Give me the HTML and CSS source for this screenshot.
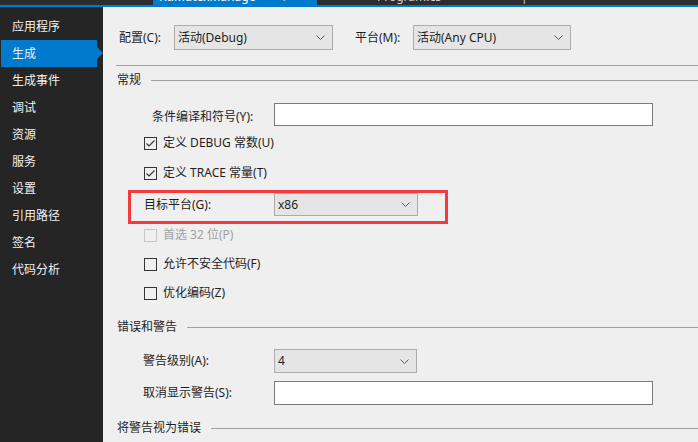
FILE: index.html
```html
<!DOCTYPE html>
<html lang="zh-CN">
<head>
<meta charset="utf-8">
<link rel="stylesheet" href="styles.css">
</head>
<body>
<div class="topbar">
  <div class="tabs">
    <div class="tab active"><span class="tab-text">Kt.MutexManage</span><span class="tab-icons">⊣ ×</span></div>
    <div class="tab other"><span class="tab-text">Program.cs</span><span class="tab-text far">|</span></div>
  </div>
</div>
<div class="accent"></div>
<div class="layout">
  <nav class="sidebar">
    <div class="nav-item">应用程序</div>
    <div class="nav-item selected">生成</div>
    <div class="nav-item">生成事件</div>
    <div class="nav-item">调试</div>
    <div class="nav-item">资源</div>
    <div class="nav-item">服务</div>
    <div class="nav-item">设置</div>
    <div class="nav-item">引用路径</div>
    <div class="nav-item">签名</div>
    <div class="nav-item">代码分析</div>
  </nav>
  <main class="main">
    <div class="config-row">
      <span class="cfg-label">配置(C):</span>
      <div class="combo combo-cfg"><span>活动(Debug)</span><svg class="chev" width="9" height="5" viewBox="0 0 9 5"><polyline points="0.5,0.5 4.5,4.5 8.5,0.5" fill="none" stroke="#5a5a5a"/></svg></div>
      <span class="cfg-label plat">平台(M):</span>
      <div class="combo combo-plat"><span>活动(Any CPU)</span><svg class="chev" width="9" height="5" viewBox="0 0 9 5"><polyline points="0.5,0.5 4.5,4.5 8.5,0.5" fill="none" stroke="#5a5a5a"/></svg></div>
    </div>
    <div class="rule"></div>

    <div class="section-head h-general"><span>常规</span><div class="line"></div></div>

    <div class="field-row r-cond">
      <span class="field-label">条件编译和符号(Y):</span>
      <div class="textbox"></div>
    </div>

    <div class="check-row r-debug">
      <span class="box"><svg width="11" height="11" viewBox="0 0 11 11"><polyline points="1.5,5.5 4,8 9.5,2.5" fill="none" stroke="#333" stroke-width="1.1"/></svg></span>
      <span>定义 DEBUG 常数(U)</span>
    </div>
    <div class="check-row r-trace">
      <span class="box"><svg width="11" height="11" viewBox="0 0 11 11"><polyline points="1.5,5.5 4,8 9.5,2.5" fill="none" stroke="#333" stroke-width="1.1"/></svg></span>
      <span>定义 TRACE 常量(T)</span>
    </div>

    <div class="highlight">
      <span class="field-label tgt">目标平台(G):</span>
      <div class="combo combo-small"><span>x86</span><svg class="chev" width="9" height="5" viewBox="0 0 9 5"><polyline points="0.5,0.5 4.5,4.5 8.5,0.5" fill="none" stroke="#5a5a5a"/></svg></div>
    </div>

    <div class="check-row r-pref disabled">
      <span class="box"></span>
      <span>首选 32 位(P)</span>
    </div>
    <div class="check-row r-unsafe">
      <span class="box"></span>
      <span>允许不安全代码(F)</span>
    </div>
    <div class="check-row r-opt">
      <span class="box"></span>
      <span>优化编码(Z)</span>
    </div>

    <div class="section-head h-errors"><span>错误和警告</span><div class="line"></div></div>

    <div class="field-row r-warn">
      <span class="field-label w">警告级别(A):</span>
      <div class="combo combo-small warn"><span>4</span><svg class="chev" width="9" height="5" viewBox="0 0 9 5"><polyline points="0.5,0.5 4.5,4.5 8.5,0.5" fill="none" stroke="#5a5a5a"/></svg></div>
    </div>
    <div class="field-row r-suppress">
      <span class="field-label w">取消显示警告(S):</span>
      <div class="textbox tall"></div>
    </div>

    <div class="section-head h-treat"><span>将警告视为错误</span><div class="line"></div></div>
  </main>
</div>
</body>
</html>
```

FILE: styles.css
```css
* { box-sizing: border-box; }
html, body {
  margin: 0;
  padding: 0;
  width: 698px;
  height: 442px;
  overflow: hidden;
  background: #efefef;
  font-family: "Noto Sans", "Noto Sans CJK SC", sans-serif;
  font-size: 12px;
  color: #1e1e1e;
}

.topbar {
  height: 5px;
  background: #2d2d30;
  overflow: hidden;
}
.tabs {
  display: flex;
  padding-left: 153px;
  height: 5px;
}
.tab {
  height: 5px;
  overflow: hidden;
  display: flex;
  white-space: nowrap;
}
.tab.active {
  width: 164px;
  background: #007acc;
  color: #ffffff;
  padding-left: 6px;
}
.tab.other {
  width: 230px;
  color: #d0d0d0;
  padding-left: 60px;
}
.tab-text {
  margin-top: -11px;
  line-height: 15px;
  font-size: 12px;
}
.tab-text.far { margin-left: 80px; }
.tab-icons {
  margin-top: -11px;
  line-height: 15px;
  margin-left: 20px;
  letter-spacing: 8px;
}
.accent {
  height: 2px;
  background: #007acc;
}

.layout {
  display: flex;
  height: 435px;
}

.sidebar {
  width: 103px;
  flex: none;
  background: #252526;
  padding-top: 6px;
}
.nav-item {
  height: 27px;
  line-height: 27px;
  margin-left: 1px;
  margin-right: 6px;
  padding-left: 11px;
  color: #f1f1f1;
  font-size: 12px;
  position: relative;
}
.nav-item.selected {
  background: #007acc;
}
.nav-item.selected::after {
  content: "";
  position: absolute;
  right: -6px;
  top: 7px;
  border-top: 6px solid transparent;
  border-bottom: 6px solid transparent;
  border-left: 6px solid #007acc;
}

.main {
  flex: 1;
  background: #efefef;
  display: flex;
  flex-direction: column;
  overflow: hidden;
}

.config-row {
  display: flex;
  align-items: center;
  height: 25px;
  margin-top: 18px;
  padding-left: 16px;
}
.cfg-label {
  width: 55px;
  line-height: 16px;
}
.cfg-label.plat {
  margin-left: 22px;
  width: 58px;
}

.combo {
  display: flex;
  align-items: center;
  justify-content: space-between;
  background: #e5e5e5;
  border: 1px solid #acacac;
  padding: 0 7px 0 3px;
  line-height: 16px;
}
.combo-cfg { width: 159px; height: 25px; }
.combo-plat { width: 158px; height: 25px; }
.combo-small { width: 144px; height: 24px; }
.combo.warn { width: 143px; }
.chev { flex: none; }

.rule {
  height: 1px;
  background: #a0a0a0;
  margin-top: 15px;
  margin-left: 13px;
}

.section-head {
  display: flex;
  align-items: center;
  height: 16px;
  padding-left: 14px;
  line-height: 16px;
  white-space: nowrap;
}
.section-head .line {
  flex: 1;
  height: 1px;
  background: #a0a0a0;
  margin-left: 10px;
}
.h-general { margin-top: 6px; }
.h-errors { margin-top: 16px; }
.h-treat { margin-top: 15px; flex: none; }

.field-row {
  display: flex;
  align-items: center;
}
.field-label {
  line-height: 16px;
}
.r-cond {
  margin-top: 15px;
  height: 23px;
  padding-left: 49px;
}
.r-cond .field-label { width: 122px; padding-top: 4px; }
.textbox {
  width: 379px;
  height: 23px;
  background: #ffffff;
  border: 1px solid #7a7a7a;
}
.textbox.tall { height: 24px; }

.check-row {
  display: flex;
  align-items: center;
  height: 20px;
  padding-left: 41px;
  line-height: 16px;
}
.box {
  width: 13px;
  height: 13px;
  border: 1px solid #333333;
  margin-right: 6px;
  display: flex;
  align-items: center;
  justify-content: center;
  flex: none;
}
.r-debug { margin-top: 7px; }
.r-trace { margin-top: 10px; }
.r-pref { margin-top: 1px; }
.r-unsafe { margin-top: 9px; }
.r-opt { margin-top: 9px; }
.check-row.disabled { color: #a2a2a2; }
.check-row.disabled .box { border-color: #c6c6c6; }

.highlight {
  display: flex;
  align-items: flex-start;
  margin-top: 7px;
  margin-left: 25px;
  width: 320px;
  height: 34px;
  border: 3px solid #f43b3b;
  padding-left: 13px;
}
.highlight .tgt {
  width: 130px;
  line-height: 23px;
}
.highlight .combo { height: 23px; }

.r-warn {
  margin-top: 14px;
  height: 24px;
  padding-left: 40px;
}
.r-suppress {
  margin-top: 8px;
  height: 24px;
  padding-left: 40px;
}
.field-label.w { width: 131px; }
```
